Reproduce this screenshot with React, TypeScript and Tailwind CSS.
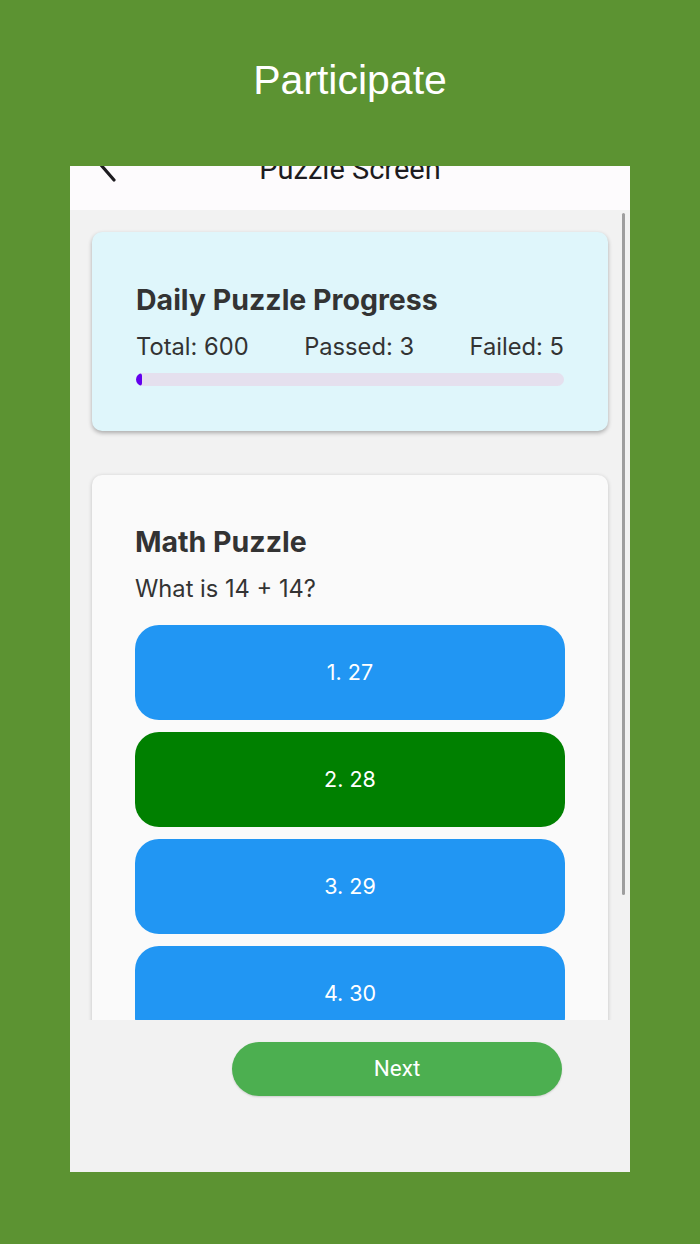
import React from "react";

export default function App() {
  const options = [
    { label: "1. 27", color: "bg-[#2196f3]" },
    { label: "2. 28", color: "bg-[#008000]" },
    { label: "3. 29", color: "bg-[#2196f3]" },
    { label: "4. 30", color: "bg-[#2196f3]" },
  ];
  return (
    <div className="w-[700px] h-[1244px] bg-[#5c9332] flex flex-col items-center overflow-hidden">
      <div
        className="h-[166px] w-full flex justify-center pt-[55px] text-white text-[41px] leading-[50px]"
        style={{ fontFamily: '"Liberation Sans", Arial, sans-serif' }}
      >
        Participate
      </div>
      <div className="w-[560px] h-[1006px] bg-[#f2f2f2] flex flex-col overflow-hidden">
        {/* header */}
        <div className="h-[44px] shrink-0 bg-[#fdfbfd] overflow-hidden">
          <div
            className="relative h-[40px] -mt-[17px] flex items-center justify-center text-[29px] leading-[32px] text-[#1d1b20]"
            style={{ fontFamily: 'Roboto, "Noto Sans", sans-serif' }}
          >
            <svg
              className="absolute left-[24px] top-[-2px]"
              width="28"
              height="36"
              viewBox="0 0 28 36"
              fill="none"
              stroke="#1d1b20"
              strokeWidth="3.2"
              strokeLinecap="round"
              strokeLinejoin="round"
            >
              <path d="M20 3 L7 18 L20 33" />
            </svg>
            <span>Puzzle Screen</span>
          </div>
        </div>
        {/* scroll area */}
        <div
          className="relative h-[810px] shrink-0 overflow-hidden px-[22px] pt-[22px] text-[#333333]"
          style={{ fontFamily: 'Inter, "Noto Sans", sans-serif' }}
        >
          <div className="absolute right-[5px] top-[3px] w-[3px] h-[682px] rounded-full bg-[#9e9e9e]" />
          {/* progress card */}
          <div className="rounded-[10px] bg-[#dff6fb] shadow-[0_2px_4px_rgba(0,0,0,0.3)] px-[44px] pt-[51px] pb-[45px]">
            <div className="text-[28.5px] leading-[34px] font-bold">Daily Puzzle Progress</div>
            <div className="mt-[16px] flex justify-between text-[23.7px] leading-[28px]">
              <span>Total: 600</span>
              <span>Passed: 3</span>
              <span>Failed: 5</span>
            </div>
            <div className="mt-[12px] h-[13px] rounded-full bg-[#e5e0ee] overflow-hidden">
              <div className="h-full w-[6px] rounded-full bg-[#6200ee]" />
            </div>
          </div>
          {/* puzzle card */}
          <div className="mt-[44px] rounded-[10px] bg-[#fafafa] shadow-[0_1px_4px_rgba(0,0,0,0.2)] px-[43px] pt-[50px] pb-[40px]">
            <div className="text-[28.5px] leading-[34px] font-bold">Math Puzzle</div>
            <div className="mt-[16px] text-[23.7px] leading-[28px]">What is 14 + 14?</div>
            <div className="mt-[22px] flex flex-col gap-[12px]">
              {options.map((o) => (
                <div
                  key={o.label}
                  className={`h-[95px] rounded-[24px] ${o.color} flex items-center justify-center text-white text-[21.5px]`}
                >
                  {o.label}
                </div>
              ))}
            </div>
          </div>
        </div>
        {/* bottom */}
        <div className="flex-1 pt-[22px] pl-[162px]">
          <div
            className="w-[330px] h-[54px] rounded-full bg-[#4caf50] shadow-[0_1px_2px_rgba(0,0,0,0.15)] flex items-center justify-center text-white text-[22.5px]"
            style={{ fontFamily: 'Roboto, "Noto Sans", sans-serif' }}
          >
            Next
          </div>
        </div>
      </div>
    </div>
  );
}
